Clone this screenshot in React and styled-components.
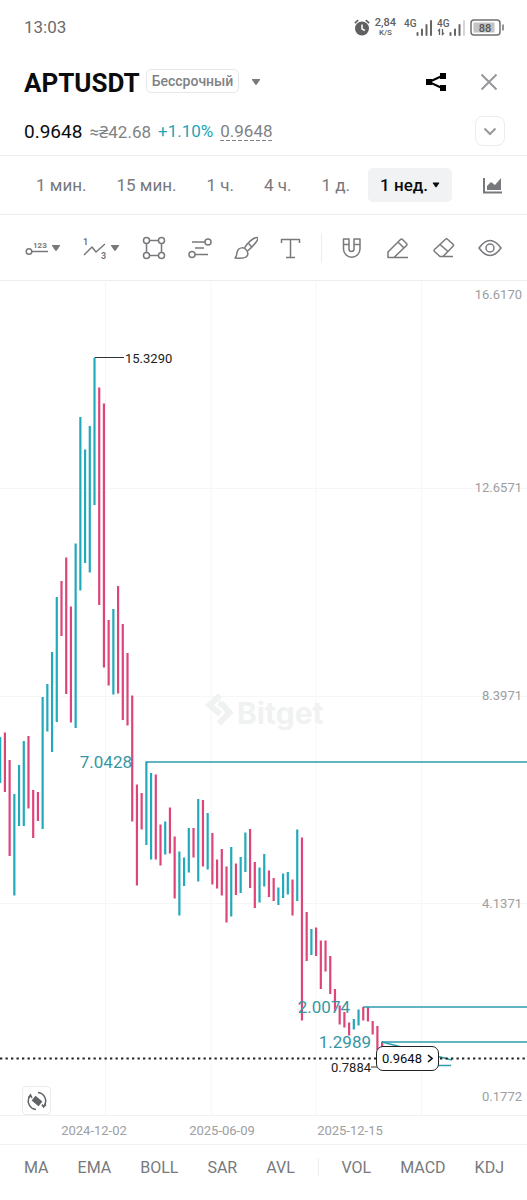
import styled, { createGlobalStyle } from 'styled-components';

const GlobalStyle = createGlobalStyle`
  * { box-sizing: border-box; }
  body {
    margin: 0;
    background: #fff;
    font-family: Roboto, "Noto Sans", sans-serif;
    color: #0b0c0e;
  }
  button {
    font: inherit;
    color: inherit;
    background: none;
    border: none;
    padding: 0;
    cursor: pointer;
  }
  svg { display: block; }
`;

const Page = styled.main`
  min-height: 100vh;
  overflow: hidden;
`;

const StatusBar = styled.div`
  display: flex;
  align-items: center;
  justify-content: space-between;
  height: 54px;
  padding: 0 23px 0 24px;
  font-size: 17px;
  color: #6b6b6b;
`;

const StatusIcons = styled.div`
  display: flex;
  align-items: center;
  gap: 5px;
`;

const NetSpeed = styled.div`
  display: flex;
  flex-direction: column;
  align-items: center;
  margin-right: 3px;
  font-size: 11px;
  font-weight: 500;
  line-height: 10px;
  color: #606060;
`;

const NetUnit = styled.small`
  font-size: 8px;
  line-height: 9px;
`;

const Header = styled.header`
  padding-bottom: 3px;
  border-bottom: 1px solid #ededee;
`;

const TitleRow = styled.div`
  display: flex;
  align-items: center;
  height: 56px;
  padding: 0 29px 0 24px;
`;

const Title = styled.h1`
  margin: 2px 0 0;
  font-size: 26px;
  font-weight: 700;
`;

const ContractTag = styled.span`
  height: 24px;
  margin: 0 12px 2px 6px;
  padding: 0 5px;
  border: 1px solid #e6e8ea;
  border-radius: 5px;
  font-size: 14px;
  font-weight: 500;
  line-height: 22px;
  color: #808285;
`;

const TitleActions = styled.div`
  display: flex;
  align-items: center;
  gap: 34px;
  margin-left: auto;
`;

const PriceRow = styled.div`
  display: flex;
  align-items: center;
  gap: 7px;
  height: 42px;
  padding: 0 22px 0 24px;
  font-size: 17px;
  color: #808285;
`;

const LastPrice = styled.strong`
  font-size: 19px;
  font-weight: 400;
  color: #0b0c0e;
`;

const Change = styled.span`
  color: #1da6b5;
`;

const MarkPrice = styled.span`
  background: repeating-linear-gradient(90deg, #808285 0 4px, transparent 4px 6px) bottom / 100% 1px no-repeat;
`;

const ExpandButton = styled.button`
  display: grid;
  place-items: center;
  width: 30px;
  height: 30px;
  margin-left: auto;
  border: 1px solid #ececee;
  border-radius: 8px;
`;

const Periods = styled.nav`
  display: flex;
  align-items: center;
  justify-content: space-between;
  height: 59px;
  padding: 0 25px 0 36px;
  border-bottom: 1px solid #ededee;
  font-size: 17px;
  color: #77797c;
`;

const PeriodList = styled.div`
  display: flex;
  align-items: center;
  gap: 30px;
`;

const Period = styled.button`
  white-space: nowrap;
`;

const ActivePeriod = styled(Period)`
  display: flex;
  align-items: center;
  gap: 4px;
  height: 34px;
  margin-left: -12px;
  padding: 0 12px;
  border-radius: 5px;
  background: #f1f2f3;
  font-weight: 500;
  color: #0b0c0e;
`;

const Tools = styled.div`
  display: flex;
  align-items: center;
  justify-content: space-between;
  height: 66px;
  padding: 0 25px 0 24px;
  border-bottom: 1px solid #ededee;
`;

const Tool = styled.button`
  display: flex;
  align-items: center;
  gap: 3px;
`;

const Divider = styled.span`
  width: 1px;
  height: ${({ $height }) => $height}px;
  margin: 0 -4px;
  background: #ededee;
`;

const Chart = styled.section`
  position: relative;
  height: 835px;
  margin-top: -1px;
`;

const Plot = styled.svg`
  width: 100%;
  height: 100%;
  text { font-family: Roboto, sans-serif; }
  .watermark { font-family: Inter, sans-serif; }
`;

const AxisPrice = styled.span`
  position: absolute;
  right: 5px;
  top: ${({ $y }) => $y - 8}px;
  font-size: 13px;
  line-height: 16px;
  color: #9c9ea1;
`;

const CurrentPrice = styled.button`
  position: absolute;
  left: 376px;
  top: 766px;
  display: flex;
  align-items: center;
  justify-content: center;
  gap: 5px;
  width: 63px;
  height: 25px;
  border: 1px solid #222;
  border-radius: 7px;
  background: #fff;
  font-size: 13px;
`;

const RotateButton = styled.button`
  position: absolute;
  left: 22px;
  bottom: 0;
  display: grid;
  place-items: center;
  width: 29px;
  height: 29px;
  border: 1px solid #ebebed;
  border-radius: 4px;
  background: #fff;
`;

const DateAxis = styled.div`
  display: flex;
  align-items: center;
  height: 30px;
  padding-left: 30px;
  border-top: 1px solid #f1f1f2;
  border-bottom: 1px solid #f1f1f2;
  font-size: 13px;
  text-align: center;
  color: #9c9ea1;
`;

const DateLabel = styled.span`
  width: 128px;
`;

const Indicators = styled.nav`
  display: flex;
  align-items: center;
  justify-content: space-between;
  height: 44px;
  padding: 0 23px 0 24px;
  font-size: 16px;
  color: #77797c;
`;

const IndicatorGroup = styled.div`
  display: flex;
  gap: 29px;
`;

const UP = '#22a9ba';
const DOWN = '#dd447a';
const LINE = '#2b9dab';
const BAR_STEP = 4.715;

// [direction, top, bottom]
const bars = [
  ['u', 457, 503], ['d', 452.5, 512], ['d', 480, 576], ['u', 514, 615.5], ['u', 485, 546],
  ['u', 461, 546], ['d', 456, 528.5], ['d', 510, 558], ['d', 512, 541], ['u', 417, 549],
  ['u', 404, 451.5], ['u', 372, 472], ['u', 317, 442], ['d', 301, 356], ['d', 277.5, 414],
  ['d', 326.5, 442.5], ['u', 263.5, 448], ['u', 137, 310.5], ['u', 169.5, 283], ['u', 146, 292.5],
  ['u', 77.5, 225], ['d', 107.5, 325], ['d', 123.5, 387.5], ['d', 340, 405.5], ['u', 329, 414.5],
  ['d', 306, 413.5], ['d', 344, 440], ['d', 373, 445.5], ['d', 415.5, 541.5], ['d', 504.5, 605.5],
  ['d', 513, 549.5], ['u', 481.5, 565], ['u', 493, 579.5], ['d', 494.5, 579.5], ['d', 544.5, 585.5],
  ['u', 541.5, 574.5], ['d', 527.5, 573.5], ['d', 556.5, 618.5], ['u', 571.5, 635.5], ['u', 577.5, 606],
  ['u', 548, 592.5], ['d', 548, 577.5], ['u', 519, 601.5], ['d', 520, 586.5], ['u', 533, 589.5],
  ['d', 553, 604.5], ['d', 579.5, 608.5], ['d', 569, 615.5], ['d', 586.5, 642.5], ['u', 567, 636.5],
  ['d', 583.5, 615], ['u', 577, 613], ['u', 552.5, 592], ['d', 549, 608], ['d', 582, 628],
  ['u', 587.5, 622.5], ['u', 574, 606.5], ['d', 590.5, 617], ['d', 598, 621], ['u', 607.5, 625],
  ['u', 593.5, 618], ['u', 592, 614.5], ['d', 599.5, 635.5], ['u', 549.5, 621], ['d', 557.5, 740.5],
  ['d', 632, 681], ['u', 649, 675], ['d', 647.5, 676], ['d', 660.5, 709], ['d', 660.5, 691.5],
  ['d', 676, 714], ['d', 709, 731], ['d', 725.5, 744.5], ['d', 732, 747.5], ['d', 742.5, 755.5],
  ['u', 739, 749.5], ['u', 729.5, 745.5], ['d', 727, 740.5], ['d', 727, 741.5], ['d', 741, 754.5],
  ['d', 746, 770], ['d', 761.5, 770],
];

const prices = [
  ['16.6170', 15], ['12.6571', 208], ['8.3971', 416], ['4.1371', 624], ['0.1772', 817],
];

// horizontal levels drawn to the right edge
const levels = [
  { label: '7.0428', x: 146, y: 482, textX: 132 },
  { label: '2.0074', x: 363, y: 727, textX: 350 },
  { label: '1.2989', x: 382, y: 762, textX: 371 },
];

const Caret = ({ size = 10, color = '#77797c' }) => (
  <svg width={size} height={size} viewBox="0 0 10 10" fill={color}>
    <path d="M1.5 2h7q1 0 .4.9L5.8 7.500q-.8.9-1.600 0L1.100 2.900Q.5 2 1.500 2z" />
  </svg>
);

const ToolIcon = ({ children }) => (
  <svg width="24" height="24" viewBox="0 0 24 24" fill="none" stroke="#77797c" strokeWidth="1.500" strokeLinejoin="round">
    {children}
  </svg>
);

const Signal = ({ faded }) => (
  <svg width="28" height="19" viewBox="0 0 28 19">
    <text x="0" y="9" fontSize="10" fontWeight="500" fill="#606060">4G</text>
    {faded && <path d="M2.500 17v-5.500L1 13M5.500 11v5.500L7 15" stroke="#606060" strokeWidth="1.300" fill="none" />}
    <path d="M13.500 17v-2M18 17v-5.500M22.500 17V7" stroke="#666" strokeWidth="2" strokeLinecap="round" />
    <path d="M27 17V3" stroke={faded ? '#d5d5d5' : '#666'} strokeWidth="2" strokeLinecap="round" />
  </svg>
);

function PhoneStatus() {
  return (
    <StatusBar>
      <span>13:03</span>
      <StatusIcons>
        <svg width="16" height="17" viewBox="0 0 16 17">
          <circle cx="8" cy="9.500" r="7" fill="#606060" />
          <path d="M8 5.500v4.300l2.800 1.700" stroke="#fff" strokeWidth="1.500" fill="none" />
          <path d="M.8 4.200L4.200 1.200M15.200 4.200L11.800 1.200" stroke="#606060" strokeWidth="1.600" />
        </svg>
        <NetSpeed>
          <span>2,84</span>
          <NetUnit>K/S</NetUnit>
        </NetSpeed>
        <Signal />
        <Signal faded />
        <svg width="34" height="17" viewBox="0 0 34 17">
          <rect x="1" y="1" width="29" height="15" rx="3" fill="#fff" stroke="#707070" strokeWidth="1.500" />
          <rect x="3.500" y="3.500" width="21" height="10" fill="#c4c4c4" />
          <path d="M33 5.500v6" stroke="#707070" strokeWidth="1.500" />
          <text x="15" y="12.500" textAnchor="middle" fontSize="11" fontWeight="500" fill="#555">88</text>
        </svg>
      </StatusIcons>
    </StatusBar>
  );
}

function DrawingTools() {
  return (
    <Tools>
      <Tool aria-label="Line">
        <ToolIcon>
          <circle cx="5" cy="15.500" r="2.800" />
          <path d="M8 15.500h16" />
          <text x="9" y="12" fontSize="8" fontWeight="700" fill="#77797c" stroke="none">123</text>
        </ToolIcon>
        <Caret />
      </Tool>
      <Tool aria-label="Waves">
        <ToolIcon>
          <path d="M1 19l8-8 4 5 9-8" />
          <text x="0" y="9" fontSize="9" fontWeight="700" fill="#77797c" stroke="none">1</text>
          <text x="18" y="23" fontSize="9" fontWeight="700" fill="#77797c" stroke="none">3</text>
        </ToolIcon>
        <Caret />
      </Tool>
      <Tool aria-label="Shapes">
        <ToolIcon>
          <path d="M7.500 4.500h9M7.500 19.500h9M4.500 7.500v9M19.500 7.500v9" />
          <circle cx="4.500" cy="4.500" r="3" /><circle cx="19.500" cy="4.500" r="3" />
          <circle cx="4.500" cy="19.500" r="3" /><circle cx="19.500" cy="19.500" r="3" />
        </ToolIcon>
      </Tool>
      <Tool aria-label="Fibonacci">
        <ToolIcon>
          <circle cx="20" cy="6" r="3" /><path d="M4 6h13M7 12h9M7 18.500h13" /><circle cx="4" cy="18.500" r="3" />
        </ToolIcon>
      </Tool>
      <Tool aria-label="Brush">
        <ToolIcon>
          <path d="M1 22c2.500-1.500 1-5 3-8 1.500-2.500 5.500-3 8-.5s2.500 6 0 7.500c-3 2-7 1-11 1z" />
          <path d="M10.500 12C13 7 19.500 1.500 23 1.500S19.500 10.500 13.500 15" /><path d="M14.500 7.500l3.500 3.500" />
        </ToolIcon>
      </Tool>
      <Tool aria-label="Text">
        <ToolIcon>
          <path d="M2.500 7V3.500h18V7M11.500 3.500v18M7 21.500h9" />
        </ToolIcon>
      </Tool>
      <Divider $height={30} />
      <Tool aria-label="Magnet">
        <ToolIcon>
          <path d="M3.500 3h5.500v10a2.500 2.500 0 0 0 5 0V3h6v10a8.250 8.250 0 0 1-16.500 0zM3.500 8.500H9M14 8.500h6" />
        </ToolIcon>
      </Tool>
      <Tool aria-label="Pencil">
        <ToolIcon>
          <path d="M2 21.500V16L14.500 3.500q1-1 2 0l4 4q1 1 0 2L8 21.500zM12 6l6 6M8 21.500h14" />
        </ToolIcon>
      </Tool>
      <Tool aria-label="Eraser">
        <ToolIcon>
          <path d="M2.500 13.500L13.500 3.300q1-1 2 0l5.500 5q1 1 0 2L11 20.500H8l-5.500-5q-1-1 0-2zM8 8.500l8 7M8 20.500h13" />
        </ToolIcon>
      </Tool>
      <Tool aria-label="Show drawings">
        <ToolIcon>
          <path d="M1 12q11-15 22 0-11 15-22 0z" /><circle cx="12" cy="12" r="4" />
        </ToolIcon>
      </Tool>
    </Tools>
  );
}

function PriceChart() {
  return (
    <Chart>
      <Plot>
        <g stroke="#f6f6f7">
          {[105.5, 211, 316, 421.5].map(x => <line key={x} x1={x} x2={x} y1="0" y2="100%" />)}
          {[208.5, 416.5, 623.5].map(y => <line key={y} x1="0" x2="100%" y1={y} y2={y} />)}
        </g>
        <path d="M220 415.500l-10.500 9.500 10.500 9M218.500 423.500l4 1 7 8-10.500 11" fill="none" stroke="#f0f2f2" strokeWidth="6" />
        <text className="watermark" x="237" y="444" fontSize="30" fontWeight="700" fill="#f0f2f2">Bitget</text>
        {bars.map(([dir, top, bottom], i) => (
          <line
            key={i}
            x1={0.2 + i * BAR_STEP}
            x2={0.2 + i * BAR_STEP}
            y1={top}
            y2={bottom}
            stroke={dir === 'u' ? UP : DOWN}
            strokeWidth="2.200"
          />
        ))}
        <path d="M95 77.500h29" stroke="#333" />
        <text x="125" y="82.500" fontSize="13" fill="#222">15.3290</text>
        {levels.map(({ label, x, y, textX }) => (
          <g key={label}>
            <line x1={x} x2="100%" y1={y} y2={y} stroke={LINE} strokeWidth="1.500" />
            <text x={textX} y={y + 6} fontSize="17" textAnchor="end" fill="#3796a3">{label}</text>
          </g>
        ))}
        <path d="M382 762l70 18M436 785.500h15" stroke={LINE} strokeWidth="1.300" fill="none" />
        <line x1="0" x2="100%" y1="778.500" y2="778.500" stroke="#222" strokeWidth="2" strokeDasharray="2.300 3.200" />
        <text x="371" y="792" fontSize="13" textAnchor="end" fill="#222">0.7884</text>
        <path d="M371 787h6" stroke="#333" />
      </Plot>
      {prices.map(([price, y]) => <AxisPrice key={price} $y={y}>{price}</AxisPrice>)}
      <CurrentPrice>
        0.9648
        <svg width="6" height="9" viewBox="0 0 6 9"><path d="M1 1l4 3.500L1 8" stroke="#111" strokeWidth="1.600" fill="none" /></svg>
      </CurrentPrice>
      <RotateButton aria-label="Rotate">
        <svg width="20" height="20" viewBox="0 0 20 20" fill="none" stroke="#606265" strokeWidth="1.500">
          <path d="M9 18.500A8.500 8.500 0 0 1 3 5M11 1.500A8.500 8.500 0 0 1 17 15M1.500 6.500L3.500 4l1.500 3M15 13.500l1.500 2.500 2.500-2.500" />
          <rect x="5.500" y="7" width="9" height="6" fill="#606265" stroke="none" transform="rotate(40 10 10)" />
        </svg>
      </RotateButton>
    </Chart>
  );
}

function App() {
  return (
    <Page>
      <GlobalStyle />
      <PhoneStatus />
      <Header>
        <TitleRow>
          <Title>APTUSDT</Title>
          <ContractTag>Бессрочный</ContractTag>
          <Caret />
          <TitleActions>
            <button aria-label="Share">
              <svg width="20" height="20" viewBox="0 0 20 20">
                <path d="M3 10L17 3.500M3 10l14 6.500" stroke="#000" strokeWidth="2" />
                <path d="M0 7h6v6H0zM14 1h6v6h-6zM14 13h6v6h-6z" />
              </svg>
            </button>
            <button aria-label="Close">
              <svg width="18" height="18" viewBox="0 0 18 18">
                <path d="M1.500 1.500l15 15M16.500 1.500l-15 15" stroke="#96989b" strokeWidth="2" />
              </svg>
            </button>
          </TitleActions>
        </TitleRow>
        <PriceRow>
          <LastPrice>0.9648</LastPrice>
          <span>≈₴42.68</span>
          <Change>+1.10%</Change>
          <MarkPrice>0.9648</MarkPrice>
          <ExpandButton aria-label="Expand">
            <svg width="14" height="9" viewBox="0 0 14 9">
              <path d="M1.500 1.500L7 7l5.500-5.500" stroke="#96989b" strokeWidth="2" fill="none" />
            </svg>
          </ExpandButton>
        </PriceRow>
      </Header>
      <Periods>
        <PeriodList>
          {['1 мин.', '15 мин.', '1 ч.', '4 ч.', '1 д.'].map(name => <Period key={name}>{name}</Period>)}
          <ActivePeriod>1 нед. <Caret size={8} color="#0b0c0e" /></ActivePeriod>
        </PeriodList>
        <button aria-label="Chart type">
          <svg width="19" height="17" viewBox="0 0 19 17" fill="#77797c">
            <path d="M0 1h2v13.500h17v2H0zM4 13V9l4-4 4 3 6-7v12z" />
          </svg>
        </button>
      </Periods>
      <DrawingTools />
      <PriceChart />
      <DateAxis>
        {['2024-12-02', '2025-06-09', '2025-12-15'].map(date => <DateLabel key={date}>{date}</DateLabel>)}
      </DateAxis>
      <Indicators>
        <IndicatorGroup>
          {['MA', 'EMA', 'BOLL', 'SAR', 'AVL'].map(name => <button key={name}>{name}</button>)}
        </IndicatorGroup>
        <Divider $height={18} />
        <IndicatorGroup>
          {['VOL', 'MACD', 'KDJ'].map(name => <button key={name}>{name}</button>)}
        </IndicatorGroup>
      </Indicators>
    </Page>
  );
}

export default App;
